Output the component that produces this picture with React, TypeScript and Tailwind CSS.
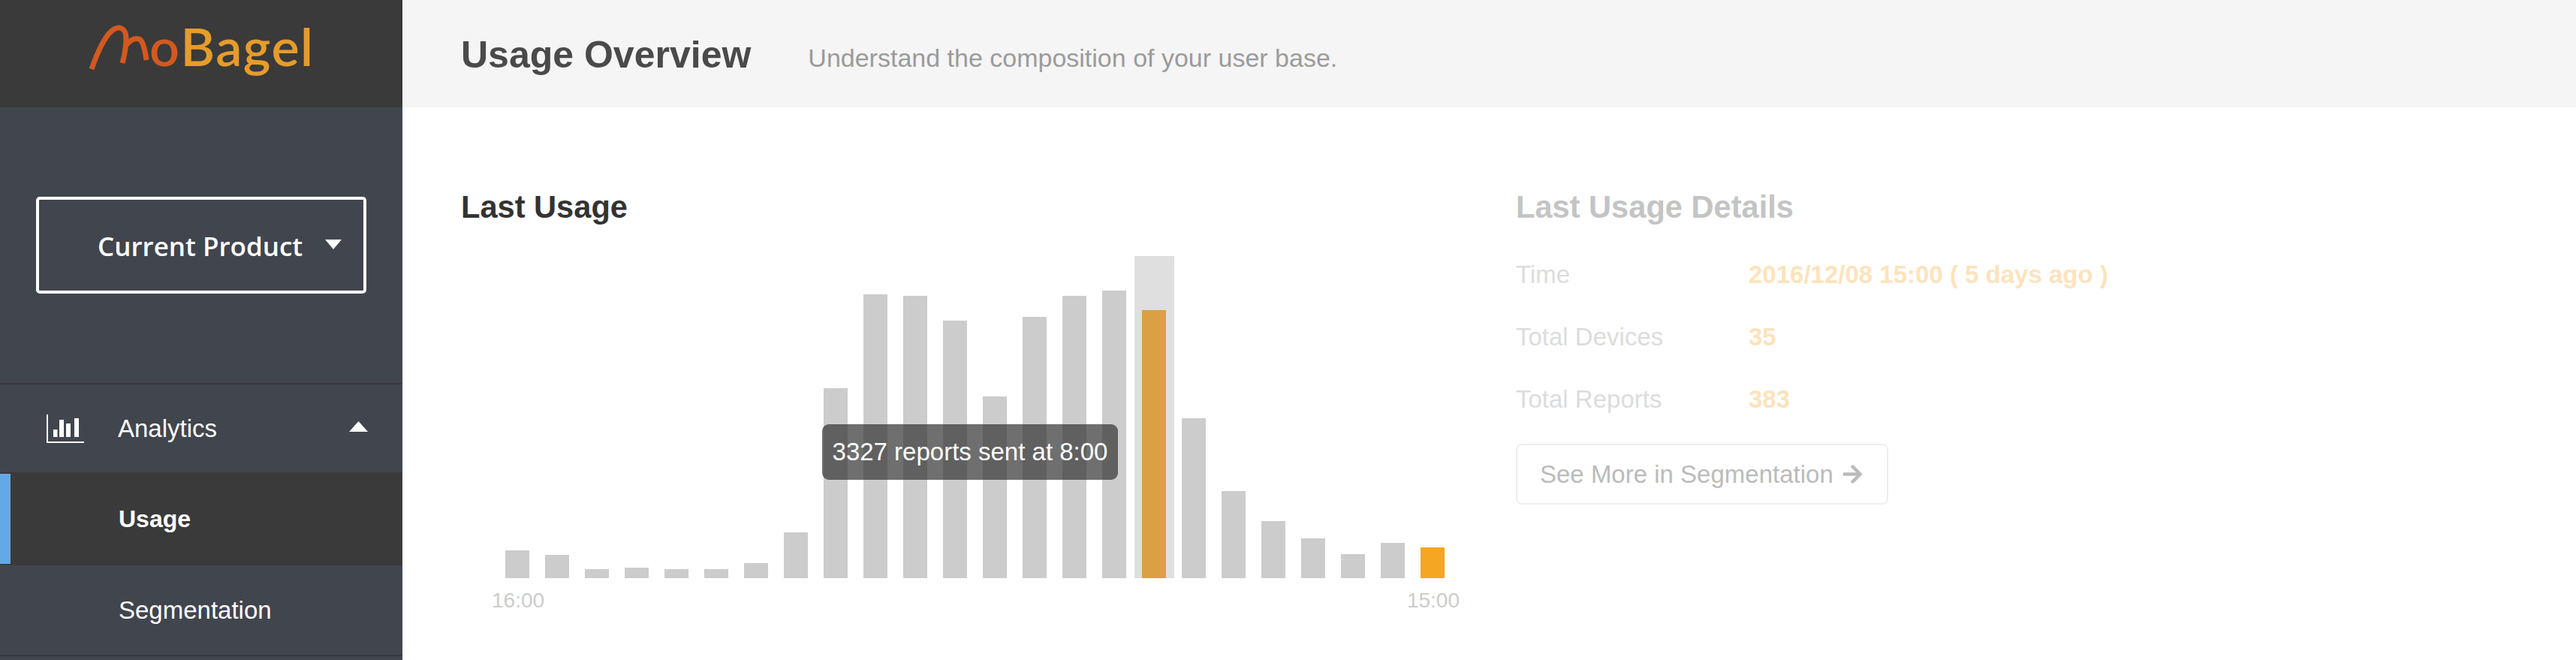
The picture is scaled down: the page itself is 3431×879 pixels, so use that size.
import { FaArrowRight } from "react-icons/fa";

const sans = "font-['Liberation_Sans',Arial,sans-serif]";

// bar heights in px, oldest hour first
const bars = [37, 31, 12, 14, 12, 12, 20, 61, 253, 378, 376, 343, 242, 348, 376, 383, 357, 213, 116, 76, 53, 32, 47, 41];
const hoveredBar = 16;
const lastBar = bars.length - 1;

const details = [
  { label: "Time", value: "2016/12/08 15:00 ( 5 days ago )" },
  { label: "Total Devices", value: "35" },
  { label: "Total Reports", value: "383" },
];

function Logo() {
  return (
    <div className="relative h-[143px] bg-[#3a3a3a] shrink-0">
      <svg className="absolute left-[118px] top-[30px]" width="90" height="66" viewBox="118 30 90 66" fill="none">
        <path
          d="M122 92 C129 72 138 50 149 41 C158 34 168 36 168 52 C168 66 165 76 163 84"
          stroke="#d2591f"
          strokeWidth="7"
        />
        <path d="M168 60 C176 50 187 48 190 58 C193 66 194 72 195 80" stroke="#d2591f" strokeWidth="7" />
      </svg>
      <div className="absolute left-[199px] top-[21px] font-['Lato',sans-serif] font-semibold text-[70px] leading-[80px] tracking-[1.5px] flex">
        <span className="text-[#d2591f]">o</span>
        <span className="text-[#e59c2c]">Bagel</span>
      </div>
    </div>
  );
}

function Sidebar() {
  return (
    <div className={`w-[536px] shrink-0 bg-[#41454d] text-white flex flex-col ${sans}`}>
      <Logo />
      <div className="h-[369px] border-b-2 border-[#383838] flex items-center px-[48px] shrink-0">
        <button className="w-[440px] h-[129px] border-4 border-white rounded-[5px] flex items-center pl-[78px] pt-[4px] font-['Open_Sans',sans-serif] font-semibold text-[35px]">
          Current Product
          <svg className="ml-[29px] mt-[-6px]" width="24" height="13" viewBox="0 0 24 13" fill="white">
            <path d="M1 0 H23 L12 13 Z" />
          </svg>
        </button>
      </div>
      <div className="h-[117px] flex items-center shrink-0">
        <svg className="ml-[62px]" width="50" height="38" viewBox="0 0 50 38" fill="white">
          <path d="M0 0 H2 V36 H50 V38 H0 Z" />
          <rect x="9" y="20" width="5.5" height="10" />
          <rect x="17" y="7" width="6" height="23" />
          <rect x="26" y="12" width="6" height="18" />
          <rect x="37" y="5" width="6" height="25" />
        </svg>
        <span className="ml-[45px] text-[33px]">Analytics</span>
        <svg className="ml-[176px] mt-[-6px]" width="25" height="14" viewBox="0 0 25 14" fill="white">
          <path d="M12.5 0 L25 14 H0 Z" />
        </svg>
      </div>
      <div className="h-[124px] bg-[#3a3a3a] flex items-center shrink-0">
        <div className="w-[14px] h-[120px] bg-[#62a9e8]" />
        <span className="ml-[144px] text-[32px] font-bold">Usage</span>
      </div>
      <div className="h-[119px] border-b-2 border-[#383838] box-content flex items-center pl-[158px] text-[33px] shrink-0">
        Segmentation
      </div>
    </div>
  );
}

function UsageChart() {
  return (
    <div className="relative mt-[41px] ml-[-29px]">
      <div className="ml-[78px] flex items-end h-[429px] w-fit">
        {bars.map((height, i) => (
          <div
            key={i}
            className={`w-[53px] h-full flex items-end pl-[10px] ${i === hoveredBar ? "bg-[#dfdfdf]" : ""}`}
          >
            <div
              className={`w-[32px] ${
                i === hoveredBar ? "bg-[#dba044]" : i === lastBar ? "bg-[#f5a623]" : "bg-[#cccccc]"
              }`}
              style={{ height }}
            />
          </div>
        ))}
      </div>
      <div className="absolute left-[510px] top-[224px] w-[394px] h-[74px] rounded-[9px] bg-[#323232]/70 flex items-center justify-center text-white text-[33px] whitespace-nowrap">
        3327 reports sent at 8:00
      </div>
      <div className="ml-[70px] w-[1289px] mt-[16px] flex justify-between text-[28px] leading-[28px] text-[#cccccc]">
        <span>16:00</span>
        <span>15:00</span>
      </div>
    </div>
  );
}

export default function App() {
  return (
    <div className="h-screen flex overflow-hidden bg-white">
      <Sidebar />
      <div className={`flex-1 flex flex-col ${sans}`}>
        <div className="h-[143px] bg-[#f5f5f5] flex items-center pl-[78px] shrink-0">
          <h1 className="text-[50px] font-bold text-[#4a4a4a] mt-[3px]">Usage Overview</h1>
          <p className="ml-[76px] mt-[12px] text-[34px] text-[#9b9b9b]">Understand the composition of your user base.</p>
        </div>
        <div className="flex pt-[109px] pl-[78px]">
          <div className="w-[1405px] shrink-0">
            <h2 className="text-[41.6px] leading-[48px] font-bold text-[#333333]">Last Usage</h2>
            <UsageChart />
          </div>
          <div>
            <h2 className="text-[41.6px] leading-[48px] font-bold text-[#c4c4c4]">Last Usage Details</h2>
            <div className="mt-[24px]">
              {details.map((row) => (
                <div key={row.label} className="h-[83px] flex items-center text-[33px]">
                  <span className="w-[310px] text-[#dcdcdc]">{row.label}</span>
                  <span className="font-bold text-[#fde3bc]">{row.value}</span>
                </div>
              ))}
            </div>
            <button className="mt-[18px] w-[496px] h-[81px] border-2 border-[#eeeeee] rounded-[8px] pl-[30px] flex items-center text-[33px] text-[#bbbbbb]">
              See More in Segmentation
              <FaArrowRight className="ml-[11px] text-[29px]" />
            </button>
          </div>
        </div>
      </div>
    </div>
  );
}
